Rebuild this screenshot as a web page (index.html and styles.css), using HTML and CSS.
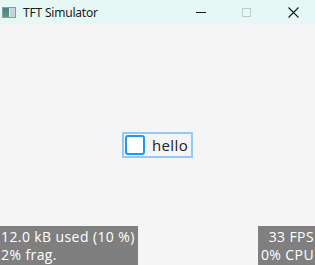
FILE: index.html
```html
<!DOCTYPE html>
<html lang="en">
<head>
    <meta charset="UTF-8">
    <meta name="viewport" content="width=device-width, initial-scale=1.0">
    <title>TFT Simulator</title>
    <link rel="stylesheet" href="styles.css">
</head>
<body>
    <div class="window">
        <div class="title-bar">
            <div class="app-icon">
                <span class="icon-left"></span>
                <span class="icon-right"></span>
            </div>
            <span class="title">TFT Simulator</span>
            <div class="controls">
                <span class="btn-min"></span>
                <span class="btn-max"></span>
                <svg class="btn-close" width="11" height="11" viewBox="0 0 11 11">
                    <path d="M0.5 0.5 L10.5 10.5 M10.5 0.5 L0.5 10.5" stroke="#1a1a1a" stroke-width="1.1" fill="none"/>
                </svg>
            </div>
        </div>
        <div class="screen">
            <label class="checkbox">
                <span class="box"></span>
                <span class="cb-text">hello</span>
            </label>
            <div class="perf mem">12.0 kB used (10 %)<br>2% frag.</div>
            <div class="perf fps">33 FPS<br>0% CPU</div>
        </div>
    </div>
</body>
</html>
```

FILE: styles.css
```css
body{
    margin: 0;
    font-family: "Open Sans", "Noto Sans", sans-serif;
}

.window{
    width: 315px;
    height: 265px;
    display: flex;
    flex-direction: column;
    overflow: hidden;
}

.title-bar{
    height: 24px;
    background-color: #e6f8f5;
    display: flex;
    align-items: center;
    flex-shrink: 0;
}

.app-icon{
    width: 14px;
    height: 11px;
    margin-left: 2px;
    margin-top: 1px;
    border: 1px solid #8a9aa6;
    box-sizing: border-box;
    display: flex;
    background-color: #dde6ec;
}

.icon-left{
    width: 6px;
    background: linear-gradient(#4a7f9a, #5aa06a);
}

.icon-right{
    flex: 1;
    margin-left: 1px;
    background-color: #c9d3db;
}

.title{
    margin-left: 7px;
    font-family: "Noto Sans", "Open Sans", sans-serif;
    font-size: 12px;
    letter-spacing: -0.2px;
    color: #1a1a1a;
}

.controls{
    margin-left: auto;
    display: flex;
    align-items: center;
    height: 100%;
}

.btn-min{
    width: 10px;
    height: 1px;
    background-color: #1a1a1a;
    margin-right: 36px;
}

.btn-max{
    width: 9px;
    height: 9px;
    border: 1px solid #c2c8c8;
    box-sizing: border-box;
    margin-right: 37px;
}

.btn-close{
    margin-right: 16px;
}

.screen{
    flex: 1;
    position: relative;
    background-color: #f5f5f5;
    display: flex;
    justify-content: center;
    align-items: center;
}

.checkbox{
    display: flex;
    align-items: center;
    gap: 7px;
    padding: 1px 3px 1px 1px;
    outline: 2px solid #94c9f6;
    margin-top: 1px;
}

.box{
    width: 20px;
    height: 20px;
    box-sizing: border-box;
    border: 2px solid #2196f3;
    border-radius: 3px;
    background-color: #ffffff;
}

.cb-text{
    font-size: 15px;
    letter-spacing: 0.4px;
    color: #212121;
    line-height: 19px;
}

.perf{
    position: absolute;
    bottom: 0;
    background-color: #7f7f7f;
    color: #ffffff;
    font-size: 14px;
    letter-spacing: 0.4px;
    line-height: 18px;
    padding: 2px 3px 1px 1px;
}

.mem{
    left: 0;
}

.fps{
    right: 0;
    text-align: right;
    padding: 2px 1px 1px 3px;
}
```
